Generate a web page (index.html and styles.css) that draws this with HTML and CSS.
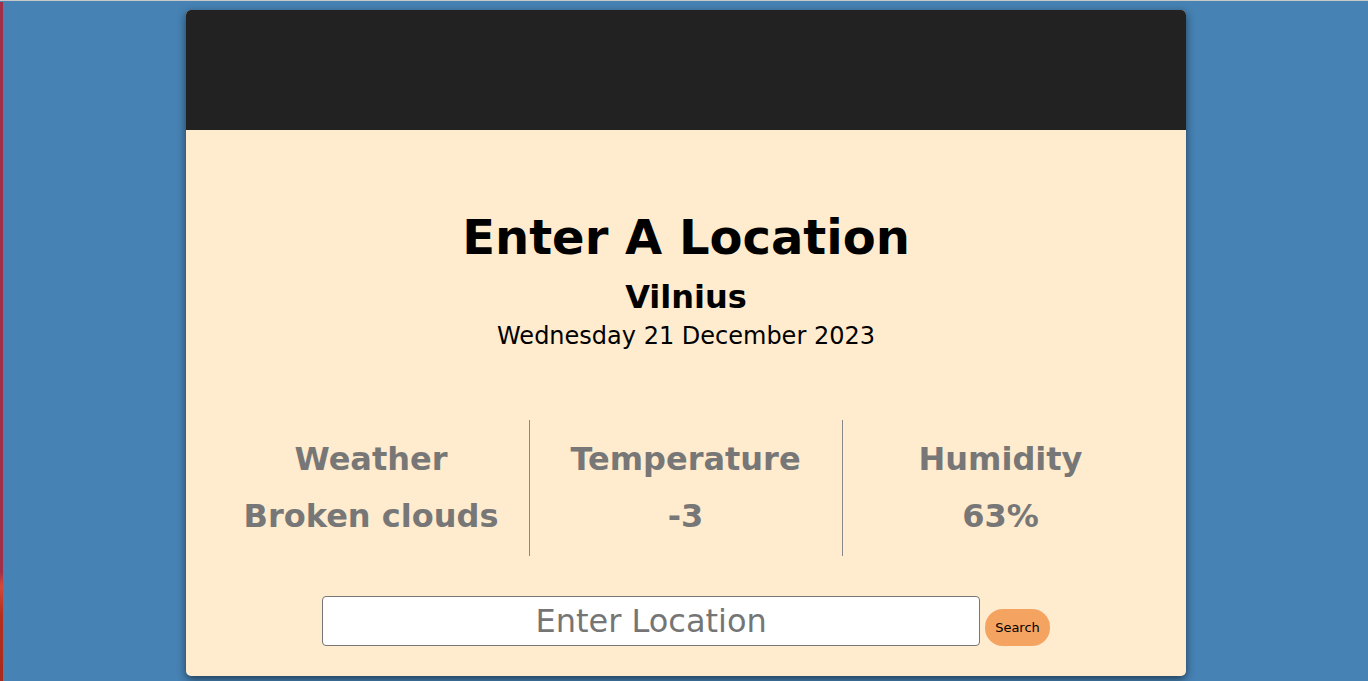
FILE: index.html
```html
<!DOCTYPE html>
<html lang="en">
<head>
<meta charset="utf-8">
<title>Weather</title>
<link rel="stylesheet" href="styles.css">
</head>
<body>
<div class="page">
  <div class="edge"></div>
  <main class="card">
    <header class="card-header"></header>
    <section class="card-body">
      <h1 class="title">Enter A Location</h1>
      <h2 class="city">Vilnius</h2>
      <p class="date">Wednesday 21 December 2023</p>
      <div class="stats">
        <div class="stat">
          <h3 class="stat-label">Weather</h3>
          <p class="stat-value">Broken clouds</p>
        </div>
        <div class="stat stat-divided">
          <h3 class="stat-label">Temperature</h3>
          <p class="stat-value">-3</p>
        </div>
        <div class="stat stat-divided">
          <h3 class="stat-label">Humidity</h3>
          <p class="stat-value">63%</p>
        </div>
      </div>
      <form class="search">
        <input class="search-input" type="text" placeholder="Enter Location">
        <button class="search-button" type="button">Search</button>
      </form>
    </section>
  </main>
</div>
</body>
</html>
```

FILE: styles.css
```css
* {
  box-sizing: border-box;
}

html, body {
  margin: 0;
  padding: 0;
  height: 100%;
}

body {
  background: #4682b4;
  font-family: "DejaVu Sans", sans-serif;
  overflow: hidden;
}

.page {
  position: relative;
  height: 100%;
  border-top: 1px solid #c8c8c8;
  display: flex;
  justify-content: center;
  padding-top: 9px;
  padding-left: 4px;
}

.edge {
  position: absolute;
  left: 0;
  top: 1px;
  bottom: 0;
  width: 3px;
  background: linear-gradient(to bottom, #a0304a 0%, #a0304a 84%, #d44a3a 86%, #b4301f 90%, #a82a1e 100%);
}

.card {
  width: 1000px;
  height: 666px;
  border-radius: 5px;
  overflow: hidden;
  background: #ffebcd;
  box-shadow: 0 3px 8px rgba(0, 0, 0, 0.55);
  display: flex;
  flex-direction: column;
}

.card-header {
  height: 120px;
  background: #222222;
  flex: none;
}

.card-body {
  display: flex;
  flex-direction: column;
  align-items: center;
  padding-top: 79px;
}

.title {
  margin: 0;
  font-size: 48px;
  font-weight: bold;
  line-height: 56px;
  color: #000;
}

.city {
  margin: 14px 0 0;
  font-size: 32px;
  font-weight: bold;
  line-height: 37px;
  color: #000;
}

.date {
  margin: 6px 0 0;
  font-size: 24px;
  line-height: 28px;
  color: #000;
}

.stats {
  margin-top: 70px;
  display: grid;
  grid-template-columns: 315px 313px 317px;
}

.stat {
  height: 136px;
  padding-top: 21px;
  display: flex;
  flex-direction: column;
  align-items: center;
  gap: 20px;
  color: #777777;
}

.stat-divided {
  border-left: 1px solid #888888;
}

.stat-label,
.stat-value {
  margin: 0;
  font-size: 32px;
  font-weight: bold;
  line-height: 37px;
}

.search {
  margin-top: 40px;
  display: flex;
  align-items: baseline;
  gap: 5px;
}

.search-input {
  width: 658px;
  height: 50px;
  padding: 0 6px;
  border: 1px solid #767676;
  border-radius: 4px;
  background: #fff;
  font-family: "DejaVu Sans", sans-serif;
  font-size: 32px;
  text-align: center;
  color: #000;
}

.search-input::placeholder {
  color: #757575;
}

.search-button {
  height: 37px;
  padding: 0 10px;
  border: none;
  border-radius: 18px;
  background: #f4a460;
  font-family: "DejaVu Sans", sans-serif;
  font-size: 13px;
  color: #000;
}
```
